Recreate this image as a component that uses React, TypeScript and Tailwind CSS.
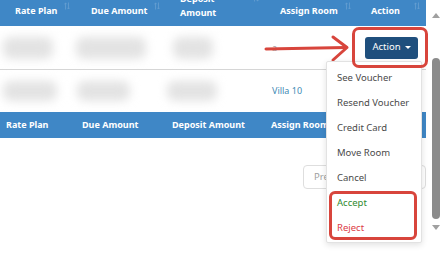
import React from 'react'

const font = { fontFamily: '"Noto Sans", "Open Sans", Arial, sans-serif' }

const cols = ['w-[76px]', 'w-[90px]', 'w-[99px]', 'w-[92px]', 'w-[69px]']

function SortIcon() {
  return (
    <svg className="absolute right-[6px] top-[2px] opacity-20" width="6" height="8" viewBox="0 0 6 8" fill="none" stroke="#ffffff" strokeWidth="0.8">
      <path d="M1.5 7.5V1M0.3 2.2L1.5 1 2.7 2.2" />
      <path d="M4.5 0.5V7M3.3 5.8L4.5 7 5.7 5.8" />
    </svg>
  )
}

function Blob({ className }: { className: string }) {
  return <div className={'rounded-[8px] bg-[#e3e3e3] blur-[5px] ' + className} />
}

const menuItems = [
  { label: 'See Voucher', color: 'text-[#4a4a4a]' },
  { label: 'Resend Voucher', color: 'text-[#4a4a4a]' },
  { label: 'Credit Card', color: 'text-[#4a4a4a]' },
  { label: 'Move Room', color: 'text-[#4a4a4a]' },
  { label: 'Cancel', color: 'text-[#4a4a4a]' },
  { label: 'Accept', color: 'text-[#2f8a2f]' },
  { label: 'Reject', color: 'text-[#dc3b45]' },
]

export default function App() {
  return (
    <div className="flex w-[446px] h-[258px] overflow-hidden bg-white" style={font}>
      {/* Table area */}
      <div className="relative w-[426px] h-full">
        {/* Header */}
        <div className="flex h-[26px] bg-[#3f87c6] text-white font-bold text-[9px] overflow-hidden">
          <div className={`${cols[0]} relative pl-[15px] pt-[4px]`}>Rate Plan<SortIcon /></div>
          <div className={`${cols[1]} relative pl-[15px] pt-[4px]`}>Due Amount<SortIcon /></div>
          <div className={`${cols[2]} relative pl-[14px] -mt-[8px] leading-[14px]`}>Deposit<br />Amount<SortIcon /></div>
          <div className={`${cols[3]} relative pl-[15px] pt-[4px]`}>Assign Room<SortIcon /></div>
          <div className={`${cols[4]} relative pl-[14px] pt-[4px]`}>Action<SortIcon /></div>
        </div>

        {/* Row 1 */}
        <div className="flex h-[44px] items-center border-b border-[#d6d6d6]">
          <div className={`${cols[0]} pl-[3px]`}><Blob className="w-[50px] h-[22px]" /></div>
          <div className={cols[1]}><Blob className="w-[70px] h-[22px]" /></div>
          <div className={`${cols[2]} pl-[7px]`}><Blob className="w-[40px] h-[22px]" /></div>
          <div className={`${cols[3]} pl-[7px] text-[9px] text-[#9a9a9a]`}>a</div>
          <div className={`${cols[4]} pl-[8px]`}>
            <button className="flex items-center gap-[4px] h-[22px] w-[53px] justify-center rounded-[3px] bg-[#1f4f7d] text-white text-[9.5px]">
              Action
              <span className="border-x-[3px] border-t-[3px] border-x-transparent border-t-white" />
            </button>
          </div>
        </div>

        {/* Row 2 */}
        <div className="flex h-[42px] items-center">
          <div className={`${cols[0]} pl-[3px]`}><Blob className="w-[54px] h-[20px]" /></div>
          <div className={`${cols[1]} pl-[1px]`}><Blob className="w-[53px] h-[20px]" /></div>
          <div className={`${cols[2]} pl-[1px]`}><Blob className="w-[50px] h-[20px]" /></div>
          <div className={`${cols[3]} pl-[7px] text-[9px] text-[#3f8bb5]`}>Villa 10</div>
          <div className={cols[4]} />
        </div>

        {/* Footer header */}
        <div className="flex h-[26px] items-center bg-[#3f87c6] text-white font-bold text-[9px]">
          <div className={`${cols[0]} pl-[6px]`}>Rate Plan</div>
          <div className={`${cols[1]} pl-[6px]`}>Due Amount</div>
          <div className={`${cols[2]} pl-[6px]`}>Deposit Amount</div>
          <div className={`${cols[3]} pl-[6px]`}>Assign Room</div>
          <div className={cols[4]} />
        </div>

        {/* Pagination */}
        <div className="flex justify-end mt-[27px]">
          <div className="flex items-center w-[123px] h-[24px] pl-[10px] border border-[#dedede] rounded-[4px] text-[9.5px] text-[#a0a0a0]">
            Previous
          </div>
        </div>

        {/* Arrow annotation */}
        <svg className="absolute left-[260px] top-[33px]" width="92" height="32" viewBox="0 0 92 32" fill="none" stroke="#d8453c" strokeWidth="3" strokeLinecap="round" strokeLinejoin="round">
          <path d="M6 16L86 14.5" />
          <path d="M73 4L87 14.5 73 27" />
        </svg>

        {/* Dropdown menu */}
        <div className="absolute left-[326px] top-[61px] w-[96px] h-[182px] bg-white border border-[#e2e2e2] rounded-[2px] shadow-[0_2px_6px_rgba(0,0,0,0.12)] pt-[4px]">
          {menuItems.map((item) => (
            <div key={item.label} className={`h-[25px] flex items-center pl-[10px] text-[9.5px] ${item.color}`}>
              {item.label}
            </div>
          ))}
        </div>

        {/* Red highlight boxes */}
        <div className="absolute left-[352px] top-[27px] w-[76px] h-[41px] border-[3px] border-[#d8453c] rounded-[7px]" />
        <div className="absolute left-[329px] top-[191px] w-[88px] h-[49px] border-[3px] border-[#d8453c] rounded-[6px]" />
      </div>

      {/* Scrollbar */}
      <div className="w-[20px] h-full flex flex-col items-center">
        <div className="mt-[13px] border-x-[4px] border-b-[5px] border-x-transparent border-b-[#a0a0a0]" />
        <div className="mt-[40px] w-[8px] h-[161px] rounded-full bg-[#8b8b8b]" />
        <div className="mt-[6px] border-x-[4px] border-t-[5px] border-x-transparent border-t-[#a0a0a0]" />
      </div>
    </div>
  )
}
